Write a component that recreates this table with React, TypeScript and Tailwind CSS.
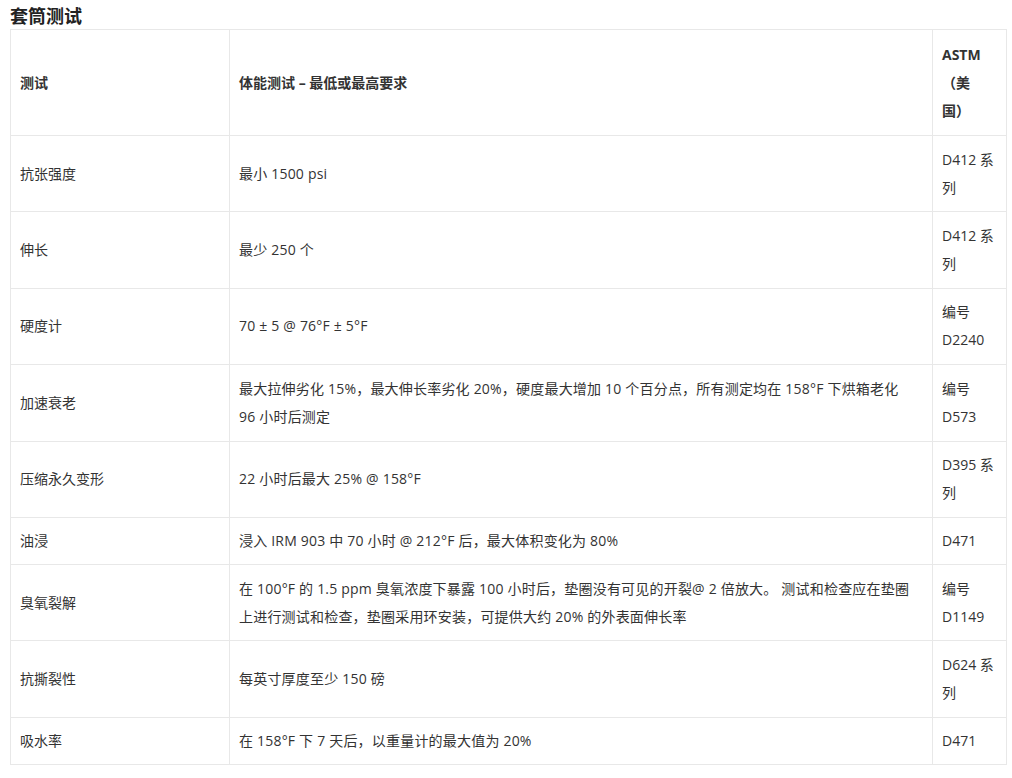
import { Fragment } from 'react'

// explicit line breaks keep the wraps where the reference puts them
const rows: [string, string[], string][] = [
  ['抗张强度', ['最小 1500 psi'], 'D412 系列'],
  ['伸长', ['最少 250 个'], 'D412 系列'],
  ['硬度计', ['70 ± 5 @ 76°F ± 5°F'], '编号 D2240'],
  [
    '加速衰老',
    ['最大拉伸劣化 15%，最大伸长率劣化 20%，硬度最大增加 10 个百分点，所有测定均在 158°F 下烘箱老化', '96 小时后测定'],
    '编号 D573',
  ],
  ['压缩永久变形', ['22 小时后最大 25% @ 158°F'], 'D395 系列'],
  ['油浸', ['浸入 IRM 903 中 70 小时 @ 212°F 后，最大体积变化为 80%'], 'D471'],
  [
    '臭氧裂解',
    [
      '在 100°F 的 1.5 ppm 臭氧浓度下暴露 100 小时后，垫圈没有可见的开裂@ 2 倍放大。 测试和检查应在垫圈',
      '上进行测试和检查，垫圈采用环安装，可提供大约 20% 的外表面伸长率',
    ],
    '编号 D1149',
  ],
  ['抗撕裂性', ['每英寸厚度至少 150 磅'], 'D624 系列'],
  ['吸水率', ['在 158°F 下 7 天后，以重量计的最大值为 20%'], 'D471'],
]

const cell = 'border border-[#e8e8e8] px-[9px] align-middle'

export default function App() {
  return (
    <div className="min-h-screen bg-white px-[10px] text-[#333] font-['Open_Sans','Noto_Sans_CJK_SC',sans-serif]">
      <h2 className="pt-[3px] text-[18px] font-bold leading-[26px] text-[#222]">套筒测试</h2>
      <table className="w-[996px] table-fixed border-collapse text-[14px] leading-[28px]">
        <colgroup>
          <col className="w-[219px]" />
          <col className="w-[703px]" />
          <col className="w-[74px]" />
        </colgroup>
        <thead>
          <tr>
            <th className={`${cell} pt-[11px] pb-[10px] text-left font-bold`}>测试</th>
            <th className={`${cell} pt-[11px] pb-[10px] text-left font-bold`}>体能测试 – 最低或最高要求</th>
            <th className={`${cell} pt-[11px] pb-[10px] text-left font-bold`}>
              ASTM
              <br />
              （美
              <br />
              国）
            </th>
          </tr>
        </thead>
        <tbody>
          {rows.map(([name, req, astm]) => {
            const single = req.length === 1 && astm === 'D471'
            const pad = single ? 'py-[9px]' : 'py-[9.7px]'
            return (
              <tr key={name}>
                <td className={`${cell} ${pad}`}>{name}</td>
                <td className={`${cell} ${pad} tracking-[0.2px]`}>
                  {req.map((line, i) => (
                    <Fragment key={i}>
                      {i > 0 && <br />}
                      {line}
                    </Fragment>
                  ))}
                </td>
                <td className={`${cell} ${pad}`}>{astm}</td>
              </tr>
            )
          })}
        </tbody>
      </table>
    </div>
  )
}
